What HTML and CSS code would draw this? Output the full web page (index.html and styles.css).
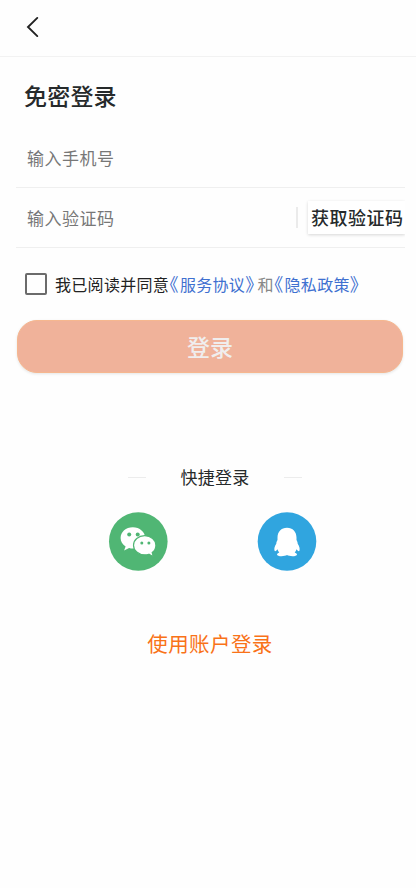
FILE: index.html
```html
<!DOCTYPE html>
<html lang="zh-CN">
<head>
<meta charset="utf-8">
<title>免密登录</title>
<link rel="stylesheet" href="styles.css">
</head>
<body>
<header class="bar">
  <svg class="back" width="14" height="22" viewBox="0 0 14 22"><path d="M11.3 1.9 2 11l9.300 9.100"/></svg>
</header>
<main class="page">
  <h1 class="title">免密登录</h1>
  <div class="field"><span class="hint">输入手机号</span></div>
  <div class="field">
    <span class="hint">输入验证码</span>
    <i class="divider"></i>
    <button class="code">获取验证码</button>
  </div>
  <div class="agree">
    <span class="box"></span>
    <span class="terms">我已阅读并同意<a class="link"><b class="mark open">《</b>服务协议<b class="mark">》</b></a></span>
    <span class="terms and">和<a class="link"><b class="mark open">《</b>隐私政策<b class="mark">》</b></a></span>
  </div>
  <button class="login">登录</button>
  <div class="quick"><i class="dash"></i><span>快捷登录</span><i class="dash"></i></div>
  <div class="socials">
    <svg width="60" height="60" viewBox="0 0 60 60">
      <circle cx="30.300" cy="29.500" r="29.300" fill="#50b674"/>
      <path fill="#fff" d="M24.800 15.200c-6.900 0-12.200 4.700-12.200 10.700 0 3.500 1.800 6.500 5 8.500l-1.500 4 5-2.500c1.200.4 2.500.5 3.700.5 6.900 0 12.400-4.700 12.400-10.500s-5.500-10.700-12.400-10.700z"/>
      <path fill="#fff" stroke="#50b674" stroke-width="1.200" d="M36.700 23.700c-6.300 0-11.200 4.200-11.200 9.500s4.900 9.600 11.200 9.600c1.500 0 2.900-.2 4.200-.6l4.400 2.500-1.100-4.100c2.400-1.800 3.700-4.400 3.700-7.400 0-5.300-4.900-9.500-11.200-9.500z"/>
      <g fill="#50b674"><circle cx="21.200" cy="22.500" r="2"/><circle cx="29.700" cy="22.500" r="2"/><circle cx="33.800" cy="30.900" r="1.500"/><circle cx="40.900" cy="30.900" r="1.500"/></g>
    </svg>
    <svg width="60" height="60" viewBox="0 0 60 60">
      <circle cx="30" cy="29.500" r="29.300" fill="#30a5df"/>
      <path fill="#fff" d="M30 15.800c-5.800 0-9.500 4.200-9.500 9.700v2.400c-.8 1.500-1.200 2.400-1.200 3.800-1.600 2.300-2.300 4.800-1.800 6.900.4 1.300 1.700.4 3-1.400.3 1.400.9 2.400 1.800 3.200-1.500.6-2.300 1.200-2.300 2 0 2.300 7.800 2.100 10 .6 2.200 1.500 10 1.700 10-.6 0-.8-.8-1.400-2.300-2 .9-.8 1.500-1.800 1.800-3.200 1.300 1.800 2.600 2.700 3 1.400.5-2.100-.2-4.600-1.800-6.900 0-1.400-.4-2.300-1.200-3.800v-2.400c0-5.500-3.700-9.700-9.500-9.700z"/>
    </svg>
  </div>
  <a class="account">使用账户登录</a>
</main>
</body>
</html>
```
FILE: styles.css
```css
* { box-sizing: border-box; }
body {
  margin: 0;
  height: 888px;
  overflow: hidden;
  background: #fefefe;
  color: #262a2b;
  font-family: "Noto Sans CJK SC", sans-serif;
}
button { border: 0; padding: 0; font-family: inherit; color: inherit; }
.bar { height: 57px; padding: 16px 0 0 26px; border-bottom: 1px solid #f2f2f2; }
.back { display: block; fill: none; stroke: #222; stroke-width: 1.9; stroke-linecap: round; }
.page { display: flex; flex-direction: column; }
.title {
  margin: 21px 0 0 24px;
  font-size: 23px;
  line-height: 34px;
  font-weight: 500;
  letter-spacing: .2px;
}
.field {
  display: flex;
  align-items: center;
  height: 60px;
  margin: 0 11px 0 16px;
  padding-left: 11px;
  border-bottom: 1px solid #efefef;
}
.title + .field { margin-top: 16px; }
.hint { flex: 1; color: #777; font-size: 17px; letter-spacing: .5px; }
.divider { width: 2px; height: 21px; background: #ebebeb; margin-right: 10px; }
.code {
  width: 97px;
  height: 33px;
  padding: 0 0 2px 3px;
  text-align: left;
  white-space: nowrap;
  background: #fff;
  font-size: 18px;
  letter-spacing: .5px;
  font-weight: 500;
  box-shadow: 0 1px 3px rgba(0, 0, 0, .16);
  clip-path: inset(-3px 0 -5px -4px);
}
.agree { display: flex; align-items: center; height: 24px; margin: 24px 0 0 25px; font-size: 16px; line-height: 24px; }
.box { width: 22px; height: 22px; border: 2px solid #6b6b6b; border-radius: 2px; margin-right: 8px; }
.terms { letter-spacing: .3px; white-space: nowrap; color: #222; }
.and { color: #888; margin-left: 3px; }
.link { color: #3f70d0; }
.mark { font-size: 18px; font-weight: 400; line-height: 1; font-feature-settings: "halt"; }
.open { margin: 0 1px 0 .5px; }
.login {
  height: 53px;
  margin: 24px 13px 0 17px;
  padding-bottom: 1px;
  border: 1px solid #f6b78f;
  border-radius: 20px;
  background: #f0b29a;
  color: #f0eeee;
  font-size: 23px;
  font-weight: 500;
  box-shadow: 0 1px 3px rgba(0, 0, 0, .1);
}
.quick { display: flex; align-items: center; justify-content: center; gap: 34px; height: 26px; margin: 91px 0 0 14px; font-size: 17px; letter-spacing: .3px; }
.quick span { padding-bottom: 1px; }
.dash { width: 18px; height: 1px; background: #ececec; }
.socials { display: flex; gap: 89px; margin: 22px 0 0 108px; }
.account { align-self: center; margin: 55px 0 0 4px; color: #f97218; font-size: 20.500px; line-height: 32px; letter-spacing: .4px; }
```
